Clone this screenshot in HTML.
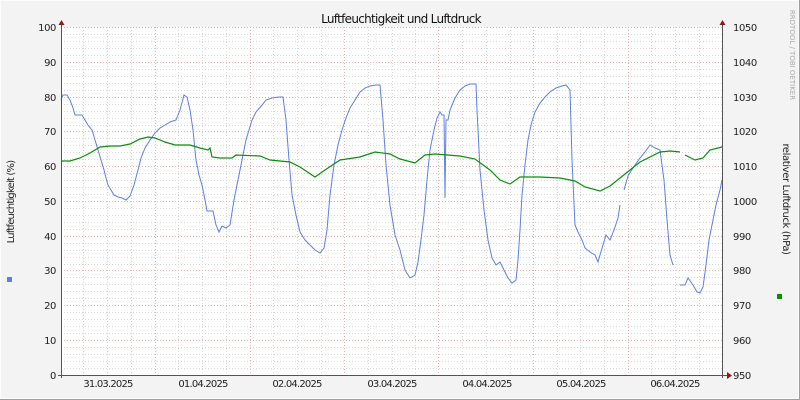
<!DOCTYPE html>
<html><head><meta charset="utf-8"><style>
html,body{margin:0;padding:0;background:#f3f3f3;}
svg{display:block;font-family:"DejaVu Sans","Liberation Sans",sans-serif;}
</style></head><body>
<svg width="800" height="400" viewBox="0 0 800 400" xmlns="http://www.w3.org/2000/svg">
<rect x="0" y="0" width="800" height="400" fill="#f3f3f3"/>
<rect x="0.5" y="0.5" width="798" height="398" fill="none" stroke="#fcfcfc"/>
<line x1="0" y1="399.5" x2="800" y2="399.5" stroke="#9e9e9e"/>
<line x1="799.5" y1="0" x2="799.5" y2="400" stroke="#9e9e9e"/>
<rect x="61" y="27" width="662" height="348" fill="#ffffff"/>
<g id="grid">
<g stroke="#d8d8d8" stroke-width="1" stroke-dasharray="1,2">
<line x1="61" x2="723" y1="368.5" y2="368.5"/><line x1="61" x2="723" y1="361.5" y2="361.5"/><line x1="61" x2="723" y1="354.5" y2="354.5"/><line x1="61" x2="723" y1="347.5" y2="347.5"/>
<line x1="61" x2="723" y1="333.5" y2="333.5"/><line x1="61" x2="723" y1="326.5" y2="326.5"/><line x1="61" x2="723" y1="319.5" y2="319.5"/><line x1="61" x2="723" y1="312.5" y2="312.5"/>
<line x1="61" x2="723" y1="298.5" y2="298.5"/><line x1="61" x2="723" y1="291.5" y2="291.5"/><line x1="61" x2="723" y1="284.5" y2="284.5"/><line x1="61" x2="723" y1="277.5" y2="277.5"/>
<line x1="61" x2="723" y1="264.5" y2="264.5"/><line x1="61" x2="723" y1="257.5" y2="257.5"/><line x1="61" x2="723" y1="250.5" y2="250.5"/><line x1="61" x2="723" y1="243.5" y2="243.5"/>
<line x1="61" x2="723" y1="229.5" y2="229.5"/><line x1="61" x2="723" y1="222.5" y2="222.5"/><line x1="61" x2="723" y1="215.5" y2="215.5"/><line x1="61" x2="723" y1="208.5" y2="208.5"/>
<line x1="61" x2="723" y1="194.5" y2="194.5"/><line x1="61" x2="723" y1="187.5" y2="187.5"/><line x1="61" x2="723" y1="180.5" y2="180.5"/><line x1="61" x2="723" y1="173.5" y2="173.5"/>
<line x1="61" x2="723" y1="159.5" y2="159.5"/><line x1="61" x2="723" y1="152.5" y2="152.5"/><line x1="61" x2="723" y1="145.5" y2="145.5"/><line x1="61" x2="723" y1="138.5" y2="138.5"/>
<line x1="61" x2="723" y1="125.5" y2="125.5"/><line x1="61" x2="723" y1="118.5" y2="118.5"/><line x1="61" x2="723" y1="111.5" y2="111.5"/><line x1="61" x2="723" y1="104.5" y2="104.5"/>
<line x1="61" x2="723" y1="90.5" y2="90.5"/><line x1="61" x2="723" y1="83.5" y2="83.5"/><line x1="61" x2="723" y1="76.5" y2="76.5"/><line x1="61" x2="723" y1="69.5" y2="69.5"/>
<line x1="61" x2="723" y1="55.5" y2="55.5"/><line x1="61" x2="723" y1="48.5" y2="48.5"/><line x1="61" x2="723" y1="41.5" y2="41.5"/><line x1="61" x2="723" y1="34.5" y2="34.5"/>
<line y1="27" y2="375" x1="83.5" x2="83.5"/><line y1="27" y2="375" x1="107.5" x2="107.5"/><line y1="27" y2="375" x1="131.5" x2="131.5"/>
<line y1="27" y2="375" x1="178.5" x2="178.5"/><line y1="27" y2="375" x1="202.5" x2="202.5"/><line y1="27" y2="375" x1="226.5" x2="226.5"/>
<line y1="27" y2="375" x1="273.5" x2="273.5"/><line y1="27" y2="375" x1="297.5" x2="297.5"/><line y1="27" y2="375" x1="321.5" x2="321.5"/>
<line y1="27" y2="375" x1="368.5" x2="368.5"/><line y1="27" y2="375" x1="392.5" x2="392.5"/><line y1="27" y2="375" x1="415.5" x2="415.5"/>
<line y1="27" y2="375" x1="462.5" x2="462.5"/><line y1="27" y2="375" x1="486.5" x2="486.5"/><line y1="27" y2="375" x1="510.5" x2="510.5"/>
<line y1="27" y2="375" x1="557.5" x2="557.5"/><line y1="27" y2="375" x1="580.5" x2="580.5"/><line y1="27" y2="375" x1="604.5" x2="604.5"/>
<line y1="27" y2="375" x1="651.5" x2="651.5"/><line y1="27" y2="375" x1="675.5" x2="675.5"/><line y1="27" y2="375" x1="699.5" x2="699.5"/>
</g>
<g stroke="#e8b0b0" stroke-width="1" stroke-dasharray="1,2">
<line x1="61" x2="723" y1="340.5" y2="340.5"/><line x1="61" x2="723" y1="305.5" y2="305.5"/><line x1="61" x2="723" y1="270.5" y2="270.5"/><line x1="61" x2="723" y1="236.5" y2="236.5"/>
<line x1="61" x2="723" y1="201.5" y2="201.5"/><line x1="61" x2="723" y1="166.5" y2="166.5"/><line x1="61" x2="723" y1="131.5" y2="131.5"/><line x1="61" x2="723" y1="97.5" y2="97.5"/>
<line x1="61" x2="723" y1="62.5" y2="62.5"/><line x1="61" x2="723" y1="27.5" y2="27.5"/>
<line y1="27" y2="375" x1="155.5" x2="155.5"/><line y1="27" y2="375" x1="250.5" x2="250.5"/><line y1="27" y2="375" x1="344.5" x2="344.5"/>
<line y1="27" y2="375" x1="438.5" x2="438.5"/><line y1="27" y2="375" x1="533.5" x2="533.5"/><line y1="27" y2="375" x1="628.5" x2="628.5"/>
</g>
</g>
<polyline fill="none" stroke="#5b7fe6" stroke-width="1" points="61,100 63,95 67,95 70,100 73,108 75,115 82,115 85,120 88,125 92,130 95,140 98,150 101,160 104,170 106,178 108,185 111,190 114,195 118,197 122,198 126,200 130,196 134,185 138,170 141,158 145,148 150,140 155,133 160,128 165,125 170,122 176,120 180,110 184,95 187,97 190,110 193,130 196,160 199,175 202,185 205,200 207,211 213,211 216,225 219,232 222,226 226,228 230,225 234,200 237,185 240,170 243,155 246,140 249,130 252,120 256,112 262,105 266,100 272,98 279,97 283,97 286,120 289,160 292,195 296,215 300,232 305,240 310,245 315,250 320,253 324,248 327,230 330,195 334,165 338,145 342,130 346,118 350,108 355,100 360,92 365,88 370,86 376,85 380,85 383,120 386,165 390,205 395,235 400,250 405,270 410,278 415,275 418,262 421,240 424,215 427,180 430,150 434,130 437,118 440,112 442,115 444,115 445,198 446,120 448,120 450,110 455,98 460,90 465,86 470,84 476,84 477,110 480,170 484,210 488,240 492,258 496,265 500,262 504,270 508,278 512,283 516,280 518,260 520,230 522,195 525,165 528,140 531,125 535,112 540,103 545,97 550,92 556,88 562,86 566,85 570,90 572,160 575,225 578,232 582,240 585,248 590,252 595,255 598,262 600,255 603,245 606,235 610,240 614,230 618,218 620,205"/>
<polyline fill="none" stroke="#5b7fe6" stroke-width="1" points="624,190 628,176 633,168 640,158 645,152 650,145 655,148 660,150 664,180 667,220 670,255 673,265"/>
<polyline fill="none" stroke="#5b7fe6" stroke-width="1" points="680,285 685,285 688,278 693,285 697,292 700,293 703,287 706,265 709,240 712,225 716,205 720,190 722,180"/>
<polyline fill="none" stroke="#0a8f0a" stroke-width="1.2" points="61,161 70,161 80,158 90,153 100,147 110,146 120,146 130,144 140,139 148,137 155,138 165,142 175,145 190,145 200,148 208,150 210,148 212,157 220,158 232,158 236,155 260,156 270,160 290,162 300,167 315,177 325,170 340,160 360,157 375,152 390,154 400,159 415,163 425,155 435,154 460,156 475,159 490,170 500,180 510,184 520,177 540,177 560,178 575,181 585,187 600,191 610,186 620,178 630,170 640,162 660,152 670,151 680,152"/>
<polyline fill="none" stroke="#0a8f0a" stroke-width="1.2" points="685,155 695,160 703,158 710,150 722,147"/>
<line x1="61.5" y1="24" x2="61.5" y2="378" stroke="#555"/>
<line x1="722.5" y1="24" x2="722.5" y2="378" stroke="#555"/>
<line x1="58" y1="375.5" x2="727" y2="375.5" stroke="#555"/>
<polygon points="58.5,25 64.5,25 61.5,20" fill="#8b1a1a"/>
<polygon points="719.5,25 725.5,25 722.5,20" fill="#8b1a1a"/>
<polygon points="727,372 727,379 732,375.5" fill="#8b1a1a"/>
<g font-size="10" fill="#222" text-anchor="end" letter-spacing="-0.4">
<text x="56" y="31">100</text><text x="56" y="66">90</text><text x="56" y="101">80</text><text x="56" y="135">70</text><text x="56" y="170">60</text><text x="56" y="205">50</text><text x="56" y="240">40</text><text x="56" y="274">30</text><text x="56" y="309">20</text><text x="56" y="344">10</text><text x="56" y="379">0</text>
</g>
<g font-size="10" fill="#222" text-anchor="start" letter-spacing="-0.4">
<text x="733" y="31">1050</text><text x="733" y="66">1040</text><text x="733" y="101">1030</text><text x="733" y="135">1020</text><text x="733" y="170">1010</text><text x="733" y="205">1000</text><text x="733" y="240">990</text><text x="733" y="274">980</text><text x="733" y="309">970</text><text x="733" y="344">960</text><text x="733" y="379">950</text>
</g>
<g font-size="10" fill="#222" text-anchor="middle" letter-spacing="-0.8">
<text x="108" y="387">31.03.2025</text><text x="203" y="387">01.04.2025</text><text x="297" y="387">02.04.2025</text><text x="392" y="387">03.04.2025</text><text x="487" y="387">04.04.2025</text><text x="581" y="387">05.04.2025</text><text x="675" y="387">06.04.2025</text>
</g>
<text x="401" y="23" font-size="12" fill="#111" text-anchor="middle" letter-spacing="-0.7">Luftfeuchtigkeit und Luftdruck</text>
<text transform="translate(14,202) rotate(-90)" font-size="10" fill="#222" text-anchor="middle" letter-spacing="-0.8">Luftfeuchtigkeit (%)</text>
<text transform="translate(783,199) rotate(90)" font-size="10" fill="#222" text-anchor="middle" letter-spacing="-0.4">relativer Luftdruck (hPa)</text>
<text transform="translate(790,55) rotate(90)" font-size="7" fill="#aaa" text-anchor="middle">RRDTOOL / TOBI OETIKER</text>
<rect x="7" y="277" width="5" height="5" fill="#5b7fe6"/>
<rect x="777" y="294" width="5" height="5" fill="#0a8f0a"/>
</svg>
</body></html>
